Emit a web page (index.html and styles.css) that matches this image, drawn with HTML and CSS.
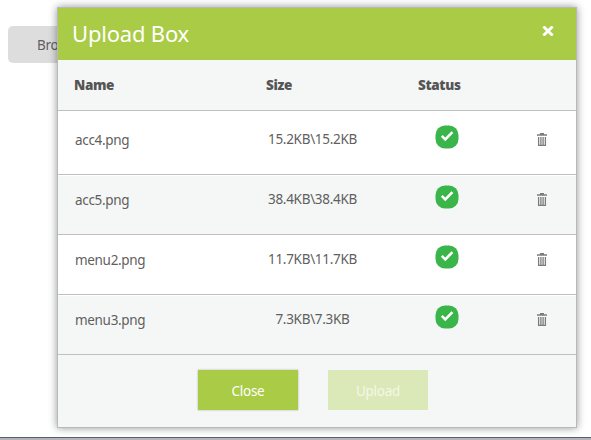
FILE: index.html
```
<!DOCTYPE html>
<html lang="en">
<head>
<meta charset="utf-8">
<title>Upload Box</title>
<link rel="stylesheet" href="styles.css">
</head>
<body>
<svg class="symbols" width="0" height="0" aria-hidden="true">
  <symbol id="check" viewBox="0 0 24 24"><rect x=".5" y=".5" width="23" height="23" rx="9.5" fill="#39b54a"/><path d="M6.8 10.8l3.5 3.5L17.4 7.2" fill="none" stroke="#fff" stroke-width="2.6"/></symbol>
  <symbol id="trash" viewBox="0 0 10 13"><path d="M3 .5h4M0 2h10" stroke="#7c7c7c" stroke-width="1.4"/><path d="M1.6 4v8.3h6.8V4M3.9 4v8M6.1 4v8" fill="none" stroke="#7c7c7c" stroke-width="1.3"/></symbol>
</svg>
<main class="page">
  <button class="browse">Browse</button>
  <footer class="page-edge"></footer>
</main>
<section class="dialog">
  <header class="title-bar">
    <h1 class="title">Upload Box</h1>
    <svg class="dismiss" viewBox="0 0 12 10"><path d="M1.4 .4l9.2 9.2M10.6 .4L1.4 9.6" stroke="#fff" stroke-width="2.8"/></svg>
  </header>
  <div class="columns head"><span>Name</span><span>Size</span><span>Status</span></div>
  <div class="columns file first"><span class="name">acc4.png</span><span class="size">15.2KB\15.2KB</span><svg class="check"><use href="#check"/></svg><svg class="trash"><use href="#trash"/></svg></div>
  <div class="columns file alt"><span class="name">acc5.png</span><span class="size">38.4KB\38.4KB</span><svg class="check"><use href="#check"/></svg><svg class="trash"><use href="#trash"/></svg></div>
  <div class="columns file"><span class="name">menu2.png</span><span class="size">11.7KB\11.7KB</span><svg class="check"><use href="#check"/></svg><svg class="trash"><use href="#trash"/></svg></div>
  <div class="columns file alt"><span class="name">menu3.png</span><span class="size">7.3KB\7.3KB</span><svg class="check"><use href="#check"/></svg><svg class="trash"><use href="#trash"/></svg></div>
  <footer class="actions"><button class="button close">Close</button><button class="button upload" disabled>Upload</button></footer>
</section>
</body>
</html>
```
FILE: styles.css
```
* { box-sizing: border-box; }
body {
  margin: 0;
  background: #fff;
  color: #5f5f5f;
  font: 13.5px/20px "Noto Sans", "Open Sans", sans-serif;
  overflow: hidden;
}
button { font: inherit; border: 0; }
.symbols { position: absolute; }
.page {
  height: 440px;
  padding: 26px 0 0 8px;
  display: flex;
  flex-direction: column;
  justify-content: space-between;
}
.browse {
  width: 106px;
  height: 37px;
  padding: 0 0 0 29px;
  border-radius: 5px;
  background: #ddd;
  color: #5f5f5f;
  text-align: left;
  letter-spacing: -.3px;
}
.page-edge {
  height: 3px;
  margin-left: -8px;
  background: #b4b4b6;
  border-top: 1px solid #526174;
}
.dialog {
  position: absolute;
  left: 57px;
  top: 7px;
  width: 520px;
  height: 421px;
  border: 1px solid #b8b9b9;
  background: #f5f7f6;
  box-shadow: 0 0 8px rgba(0, 0, 0, .42);
}
.title-bar {
  height: 52px;
  padding: 0 22px 0 14px;
  display: flex;
  justify-content: space-between;
  background: #a9cb46;
}
.title {
  margin: 0;
  color: #fff;
  font-size: 22px;
  font-weight: 400;
  line-height: 50px;
  letter-spacing: -.2px;
}
.dismiss { width: 12px; height: 10px; margin-top: 18px; }
.columns {
  display: grid;
  grid-template-columns: 192px 152px 110px 1fr;
  padding-left: 16px;
  border-bottom: 1px solid #bfc0c0;
}
.head { height: 51px; padding-top: 15px; font-weight: 900; letter-spacing: -.35px; color: #555; }
.file { height: 60px; padding-top: 14px; background: #fff; border-top: 1px solid #fff; }
.file.first { height: 64px; padding-top: 18px; }
.file.alt { background: #f5f7f6; }
.name { padding-left: 1px; letter-spacing: -.32px; }
.size { width: 93px; text-align: center; margin-top: -1px; white-space: nowrap; letter-spacing: -.3px; }
.check { width: 24px; height: 24px; margin: -5px 0 0 16.5px; }
.trash { width: 10px; height: 13px; margin: 3px 0 0 9px; }
.actions {
  display: flex;
  justify-content: center;
  gap: 30px;
  padding: 15px 8px 0 0;
}
.button {
  width: 100px;
  height: 40px;
  padding: 2px 0 0;
  background: #a9cb46;
  color: #fff;
  letter-spacing: -.3px;
}
.close { box-shadow: 0 0 2px rgba(0, 0, 0, .3); }
.upload { background: #dbe8b8; color: #f3f8e5; }
```
